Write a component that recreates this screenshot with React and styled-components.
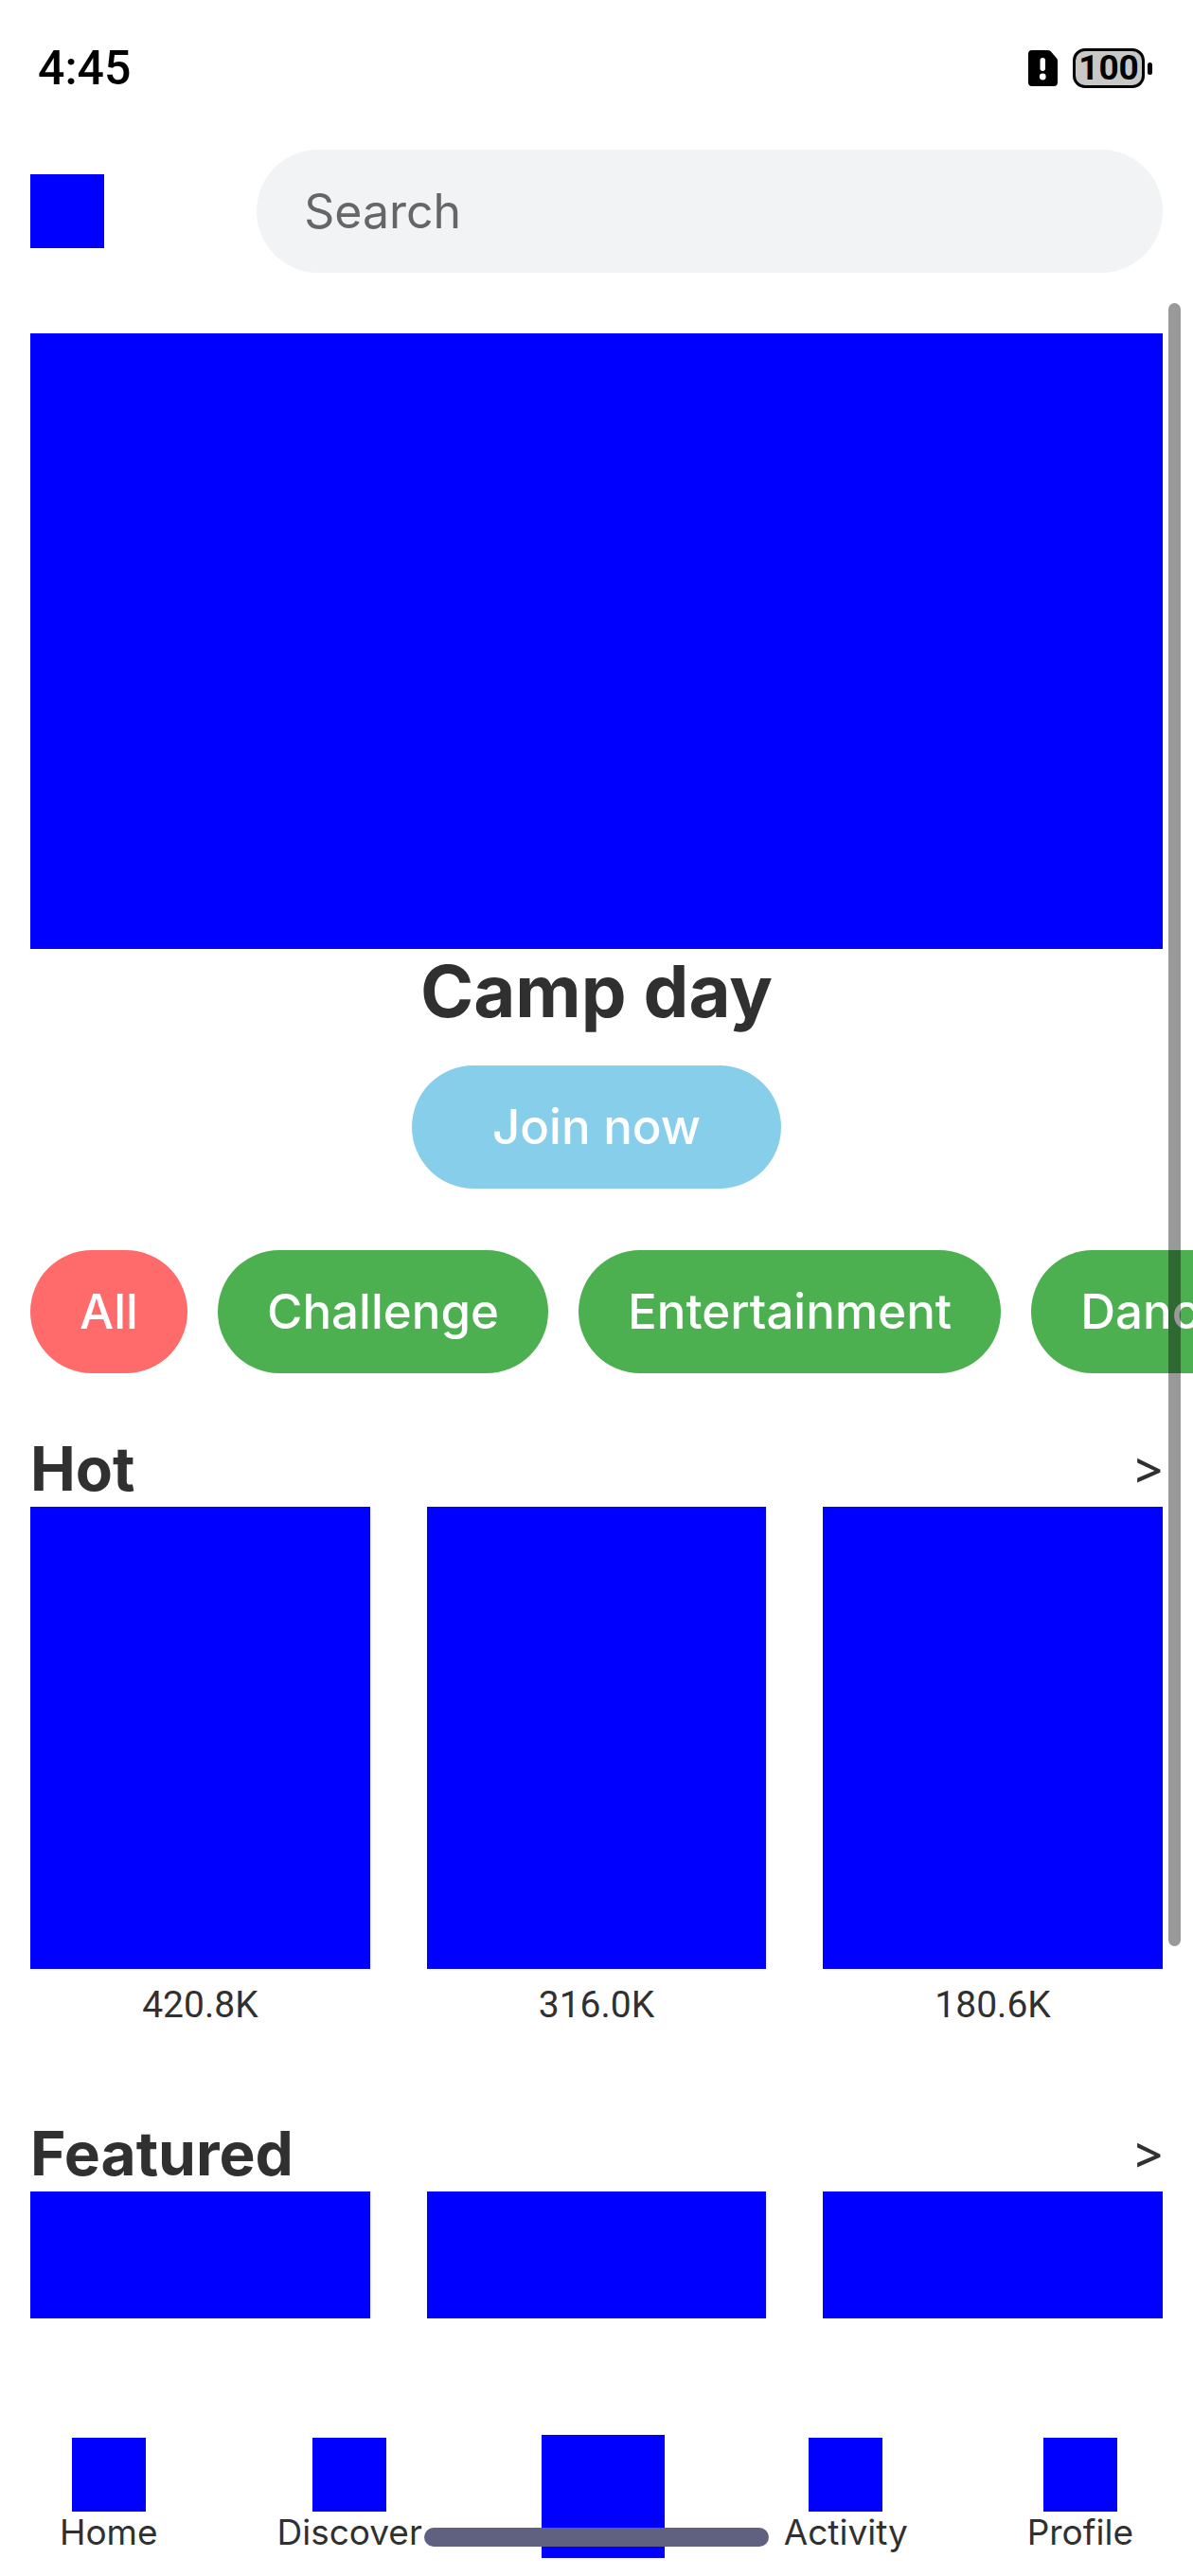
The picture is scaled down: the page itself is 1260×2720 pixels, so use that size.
import React, { useState } from 'react';
import styled, { createGlobalStyle } from 'styled-components';

const GlobalStyle = createGlobalStyle`
  *, *::before, *::after { box-sizing: border-box; }
  body { margin: 0; background: #fff; }
  button, input { font: inherit; color: inherit; border: 0; margin: 0; padding: 0; background: none; }
`;

const Shell = styled.div`
  position: relative;
  display: flex;
  flex-direction: column;
  height: 100vh;
  overflow: hidden;
  background: #fff;
  color: #303030;
  font-family: Inter, 'Open Sans', sans-serif;
`;

const StatusBar = styled.div`
  display: flex;
  align-items: center;
  justify-content: space-between;
  height: 144px;
  padding: 0 43px 0 40px;
  color: #000;
`;

const Time = styled.time`
  font-family: Roboto, sans-serif;
  font-size: 50px;
  line-height: 60px;
  font-weight: 500;
`;

const StatusIcons = styled.div`
  display: flex;
  align-items: center;
  gap: 16px;
`;

const Battery = styled.div`
  display: flex;
  align-items: center;
  gap: 3px;
`;

const BatteryBody = styled.div`
  display: flex;
  align-items: center;
  justify-content: center;
  width: 76px;
  height: 42px;
  border: 3px solid #000;
  border-radius: 13px;
  background: #c8c8c8;
  font-family: Roboto, sans-serif;
  font-size: 37px;
  line-height: 36px;
  font-weight: 700;
`;

const BatteryTip = styled.div`
  width: 5px;
  height: 13px;
  border-radius: 3px;
  background: #000;
`;

const Header = styled.header`
  display: flex;
  align-items: center;
  justify-content: space-between;
  padding: 14px 32px 32px;
`;

const Square = styled.span`
  display: block;
  width: ${(p) => p.$size}px;
  height: ${(p) => p.$size}px;
  background: #0000ff;
`;

const IconButton = styled.button`
  cursor: pointer;
`;

const SearchInput = styled.input`
  width: 80%;
  height: 130px;
  && { padding: 0 50px; }
  border-radius: 65px;
  && { background: #f1f3f5; }
  && { font-size: 50px; }
  outline: none;

  &::placeholder {
    color: #666;
    opacity: 1;
  }
  &::-webkit-search-cancel-button { display: none; }
`;

const Scroller = styled.main`
  position: relative;
  flex: 1;
  min-height: 0;
  overflow: hidden;
`;

const ScrollThumb = styled.div`
  position: absolute;
  top: 0;
  right: 13px;
  width: 13px;
  height: 1735px;
  border-radius: 7px;
  background: rgba(0, 0, 0, 0.4);
`;

const Hero = styled.section`
  display: flex;
  flex-direction: column;
  align-items: center;
  padding: 32px 32px 0;
`;

const Banner = styled.div`
  width: 100%;
  height: 650px;
  background: #0000ff;
`;

const Title = styled.h1`
  margin: 0 0 35px;
  font-size: 76px;
  line-height: 88px;
  font-weight: 700;
`;

const Pill = styled.button`
  && {
    padding: 0 52px 2px;
    background: ${(p) => p.$color};
    color: #fff;
    font-size: 51px;
    font-weight: 450;
  }
  flex: none;
  min-width: ${(p) => (p.$wide ? 390 : 166)}px;
  height: 130px;
  border-radius: 65px;
  white-space: nowrap;
  cursor: pointer;
`;

const Chips = styled.div`
  display: flex;
  gap: 32px;
  margin: 65px 0;
  padding-left: 32px;
  overflow: hidden;
`;

const Section = styled.section`
  padding: 0 32px 98px;
`;

const SectionHead = styled.div`
  display: flex;
  align-items: center;
  justify-content: space-between;
  padding-bottom: 4px;
`;

const SectionTitle = styled.h2`
  margin: 0;
  font-size: 64px;
  line-height: 72px;
  font-weight: 700;
`;

const More = styled.a`
  color: inherit;
  font-family: 'Open Sans', sans-serif;
  font-size: 51px;
  font-weight: 600;
  line-height: 72px;
  text-decoration: none;
`;

const Cards = styled.div`
  display: flex;
  justify-content: space-between;
`;

const Card = styled.button`
  display: flex;
  flex-direction: column;
  align-items: center;
  width: 30%;
  cursor: pointer;
`;

const Poster = styled.span`
  width: 100%;
  height: 488px;
  background: #0000ff;
`;

const Count = styled.span`
  margin-top: 15px;
  font-family: Roboto, sans-serif;
  font-size: 39px;
  line-height: 46px;
`;

const Nav = styled.nav`
  display: flex;
  align-items: center;
  justify-content: space-around;
  padding: 123px 0 19px;
`;

const NavItem = styled.button`
  display: flex;
  flex-direction: column;
  align-items: center;
  && {
    padding-bottom: ${(p) => (p.$main ? 0 : 2)}px;
    font-size: 37px;
    line-height: 44px;
  }
  cursor: pointer;
`;

const HomeIndicator = styled.div`
  position: absolute;
  left: 50%;
  bottom: 31px;
  width: 364px;
  height: 20px;
  border-radius: 10px;
  background: #606080;
  transform: translateX(-50%);
`;

function SimAlertIcon() {
  return (
    <svg width="31" height="38" viewBox="0 0 31 38" aria-hidden="true">
      <path d="M4 0H21Q23 0 24 1.500L30 8.500Q31 9.700 31 11V34Q31 38 27 38H4Q0 38 0 34V4Q0 0 4 0Z" fill="#000" />
      <rect x="12.500" y="8" width="5.500" height="14" rx="2.750" fill="#fff" />
      <circle cx="15.250" cy="28" r="3.400" fill="#fff" />
    </svg>
  );
}

const categories = ['All', 'Challenge', 'Entertainment', 'Dance'];

const sections = [
  { title: 'Hot', cards: [{ id: 1, count: '420.8K' }, { id: 2, count: '316.0K' }, { id: 3, count: '180.6K' }] },
  { title: 'Featured', cards: [{ id: 4 }, { id: 5 }, { id: 6 }] },
];

const navItems = [
  { id: 'home', label: 'Home' },
  { id: 'discover', label: 'Discover' },
  { id: 'create' },
  { id: 'activity', label: 'Activity' },
  { id: 'profile', label: 'Profile' },
];

export default function App() {
  const [category, setCategory] = useState('All');

  return (
    <>
      <GlobalStyle />
      <Shell>
        <StatusBar>
          <Time>4:45</Time>
          <StatusIcons>
            <SimAlertIcon />
            <Battery>
              <BatteryBody>100</BatteryBody>
              <BatteryTip />
            </Battery>
          </StatusIcons>
        </StatusBar>

        <Header>
          <IconButton type="button" aria-label="Menu">
            <Square $size={78} />
          </IconButton>
          <SearchInput type="search" placeholder="Search" aria-label="Search" />
        </Header>

        <Scroller>
          <Hero>
            <Banner />
            <Title>Camp day</Title>
            <Pill type="button" $wide $color="#87ceeb">Join now</Pill>
          </Hero>

          <Chips>
            {categories.map((name) => (
              <Pill
                key={name}
                type="button"
                aria-pressed={name === category}
                $color={name === category ? '#ff6b6b' : '#4caf50'}
                onClick={() => setCategory(name)}
              >
                {name}
              </Pill>
            ))}
          </Chips>

          {sections.map((section) => (
            <Section key={section.title}>
              <SectionHead>
                <SectionTitle>{section.title}</SectionTitle>
                <More href="#more" aria-label={`More ${section.title}`}>&gt;</More>
              </SectionHead>
              <Cards>
                {section.cards.map((card) => (
                  <Card key={card.id} type="button" aria-label={`${section.title} video`}>
                    <Poster />
                    {card.count && <Count>{card.count}</Count>}
                  </Card>
                ))}
              </Cards>
            </Section>
          ))}

          <ScrollThumb />
        </Scroller>

        <Nav>
          {navItems.map((item) => (
            <NavItem key={item.id} type="button" $main={!item.label} aria-label={item.label || 'Create'}>
              <Square $size={item.label ? 78 : 130} />
              {item.label}
            </NavItem>
          ))}
        </Nav>

        <HomeIndicator />
      </Shell>
    </>
  );
}
